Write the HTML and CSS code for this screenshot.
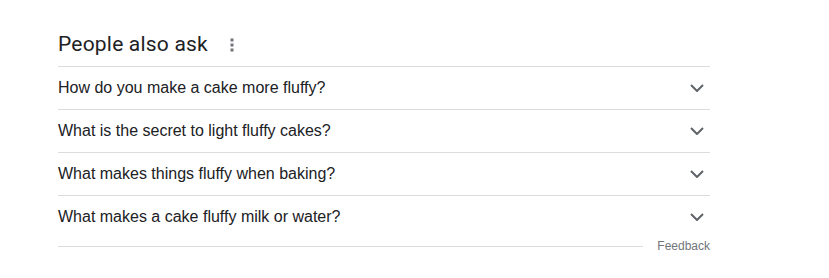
FILE: index.html
```html
<!DOCTYPE html>
<html>
<head>
<meta charset="utf-8">
<link rel="stylesheet" href="styles.css">
</head>
<body>
<div class="paa">
  <div class="head">
    <span class="title">People also ask</span>
    <svg class="dots" width="4" height="14" viewBox="0 0 4 14"><rect x="0.5" y="0.5" width="3" height="3" fill="#70757a"/><rect x="0.5" y="5.5" width="3" height="3" fill="#70757a"/><rect x="0.5" y="10.5" width="3" height="3" fill="#70757a"/></svg>
  </div>
  <div class="row"><span>How do you make a cake more fluffy?</span><svg class="chev" width="14" height="8" viewBox="0 0 14 8"><path d="M1 1l6 6 6-6" fill="none" stroke="#5f6368" stroke-width="2"/></svg></div>
  <div class="row"><span>What is the secret to light fluffy cakes?</span><svg class="chev" width="14" height="8" viewBox="0 0 14 8"><path d="M1 1l6 6 6-6" fill="none" stroke="#5f6368" stroke-width="2"/></svg></div>
  <div class="row"><span>What makes things fluffy when baking?</span><svg class="chev" width="14" height="8" viewBox="0 0 14 8"><path d="M1 1l6 6 6-6" fill="none" stroke="#5f6368" stroke-width="2"/></svg></div>
  <div class="row last"><span>What makes a cake fluffy milk or water?</span><svg class="chev" width="14" height="8" viewBox="0 0 14 8"><path d="M1 1l6 6 6-6" fill="none" stroke="#5f6368" stroke-width="2"/></svg></div>
  <div class="foot"><div class="rule"></div><span class="fb">Feedback</span></div>
</div>
</body>
</html>
```
FILE: styles.css
```css
html, body { margin: 0; padding: 0; background: #fff; }
.paa { margin-left: 58px; width: 652px; font-family: "Liberation Sans", Arial, sans-serif; color: #202124; }
.head { margin-top: 30px; height: 28px; padding-bottom: 8px; border-bottom: 1px solid #dadce0; display: flex; align-items: center; }
.title { font-family: Roboto, "Liberation Sans", sans-serif; font-size: 21px; letter-spacing: 0.2px; line-height: 28px; color: #202124; }
.dots { margin-left: 22px; margin-top: 2px; }
.row { height: 42px; border-bottom: 1px solid #dadce0; display: flex; align-items: center; justify-content: space-between; font-size: 16px; }
.row.last { border-bottom: none; }
.chev { margin-right: 6px; }
.foot { height: 16px; display: flex; align-items: center; }
.rule { flex: 1; height: 1px; background: #dadce0; margin-right: 14px; margin-top: 1px; }
.fb { font-size: 12px; color: #70757a; line-height: 16px; }
```
